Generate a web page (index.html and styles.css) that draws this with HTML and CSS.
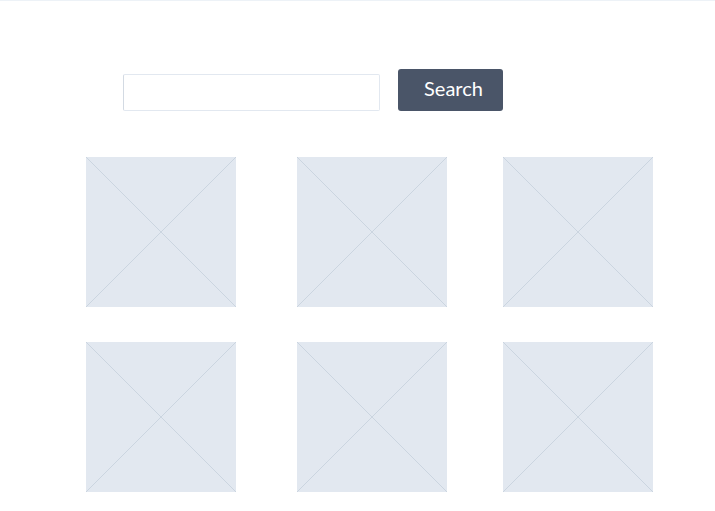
FILE: index.html
```html
<!DOCTYPE html>
<html lang="en">
<head>
<meta charset="utf-8">
<title>Search</title>
<link rel="stylesheet" href="styles.css">
</head>
<body>
<div class="topline"></div>
<main class="page">
  <form class="search">
    <input class="search-input" type="text" aria-label="Search">
    <button class="search-btn" type="button">Search</button>
  </form>
  <section class="gallery">
    <div class="ph"><svg viewBox="0 0 150 150" preserveAspectRatio="none"><line x1="0" y1="0" x2="150" y2="150"/><line x1="150" y1="0" x2="0" y2="150"/></svg></div>
    <div class="ph"><svg viewBox="0 0 150 150" preserveAspectRatio="none"><line x1="0" y1="0" x2="150" y2="150"/><line x1="150" y1="0" x2="0" y2="150"/></svg></div>
    <div class="ph"><svg viewBox="0 0 150 150" preserveAspectRatio="none"><line x1="0" y1="0" x2="150" y2="150"/><line x1="150" y1="0" x2="0" y2="150"/></svg></div>
    <div class="ph"><svg viewBox="0 0 150 150" preserveAspectRatio="none"><line x1="0" y1="0" x2="150" y2="150"/><line x1="150" y1="0" x2="0" y2="150"/></svg></div>
    <div class="ph"><svg viewBox="0 0 150 150" preserveAspectRatio="none"><line x1="0" y1="0" x2="150" y2="150"/><line x1="150" y1="0" x2="0" y2="150"/></svg></div>
    <div class="ph"><svg viewBox="0 0 150 150" preserveAspectRatio="none"><line x1="0" y1="0" x2="150" y2="150"/><line x1="150" y1="0" x2="0" y2="150"/></svg></div>
  </section>
</main>
</body>
</html>
```
FILE: styles.css
```css
html, body {
  margin: 0;
  padding: 0;
  background: #ffffff;
  font-family: Lato, "Liberation Sans", sans-serif;
}
.topline {
  height: 1px;
  background: #edf2f7;
}
.page {
  padding-top: 68px;
}
.search {
  display: flex;
  align-items: flex-end;
  gap: 18px;
  padding-left: 123px;
  margin: 0;
}
.search-input {
  box-sizing: border-box;
  width: 257px;
  height: 37px;
  margin: 0;
  border: 1px solid #e2e8f0;
  border-left-color: #d3dae3;
  border-radius: 2px;
  background: #fff;
  padding: 0 8px;
  outline: none;
}
.search-btn {
  box-sizing: border-box;
  width: 105px;
  height: 42px;
  margin: 0;
  border: none;
  border-radius: 3px;
  background: #4a5568;
  color: #ffffff;
  font-family: Lato, "Liberation Sans", sans-serif;
  font-size: 20px;
  padding: 0 0 4px 6px;
}
.gallery {
  display: grid;
  grid-template-columns: 211px 206px 150px;
  row-gap: 35px;
  padding-left: 86px;
  margin-top: 46px;
}
.ph {
  width: 150px;
  height: 150px;
  background: #e2e8f0;
}
.ph svg {
  display: block;
  width: 150px;
  height: 150px;
}
.ph line {
  stroke: #cbd5e0;
  stroke-width: 1;
}
```
